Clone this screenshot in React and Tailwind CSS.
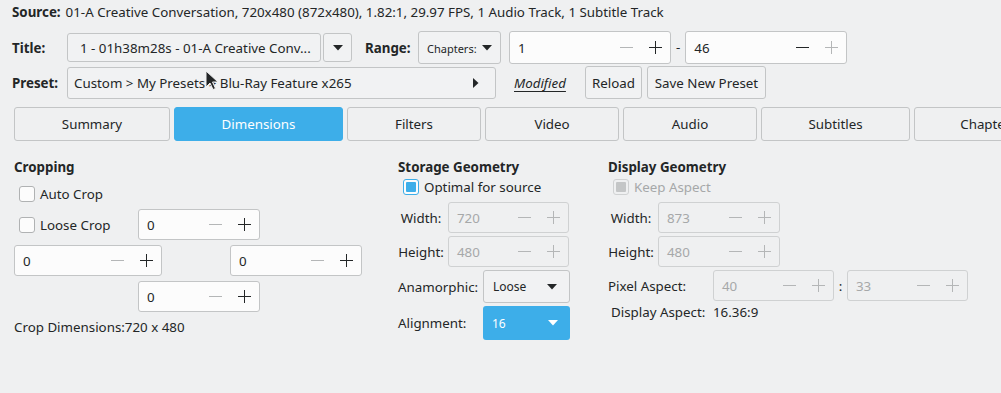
import React from "react";

const Minus = ({ c }) => (
  <svg width="13" height="13" viewBox="0 0 13 13"><line x1="0" y1="6.5" x2="13" y2="6.5" stroke={c} strokeWidth="1" /></svg>
);
const Plus = ({ c }) => (
  <svg width="13" height="13" viewBox="0 0 13 13"><line x1="0" y1="6.5" x2="13" y2="6.5" stroke={c} strokeWidth="1" /><line x1="6.5" y1="0" x2="6.5" y2="13" stroke={c} strokeWidth="1" /></svg>
);
const Tri = ({ c = "#232627" }) => (
  <svg width="10" height="6" viewBox="0 0 10 6"><path d="M0 0 L10 0 L5 5.5 Z" fill={c} /></svg>
);

function Spin({ value, w, h = "h-[31px]", minusOn = false, plusOn = true, disabled = false }) {
  const on = "#232627";
  const off = "#b4b6b7";
  return (
    <div
      className={`flex items-center ${h} rounded-[3px] border ${disabled ? "border-[#cfd1d2] bg-[#eff0f1] text-[#a6a8a9]" : "border-[#c3c5c6] bg-[#fcfcfc] text-[#232627]"} pl-[8px] pr-[8px]`}
      style={{ width: w }}
    >
      <span className="flex-1 pt-[2px]">{value}</span>
      <span className="mr-[16px] flex"><Minus c={disabled ? off : minusOn ? on : off} /></span>
      <span className="flex"><Plus c={disabled ? off : plusOn ? on : off} /></span>
    </div>
  );
}

function Check({ checked, disabled, label }) {
  return (
    <div className="flex items-center gap-[5px]">
      {checked ? (
        <div className="w-[16px] h-[16px] rounded-[3px] border border-[#3daee9] bg-[#fcfcfc] p-[2px]">
          <div className="w-full h-full rounded-[1px] bg-[#3daee9]" />
        </div>
      ) : disabled ? (
        <div className="w-[16px] h-[16px] rounded-[3px] border border-[#d0d2d3] bg-[#eff0f1] p-[2px]">
          <div className="w-full h-full rounded-[1px] bg-[#c4c6c7]" />
        </div>
      ) : (
        <div className="w-[16px] h-[16px] rounded-[3px] border border-[#b0b2b3] bg-[#fcfcfc]" />
      )}
      <span className={`pt-[2px] ${disabled ? "text-[#a6a8a9]" : ""}`}>{label}</span>
    </div>
  );
}

const Tab = ({ label, w, active }) => (
  <div
    className={`flex-none flex items-center justify-center h-[34px] pt-[2px] rounded-[3px] border ${active ? "bg-[#3daee9] border-[#3daee9] text-white" : "bg-[#eff0f1] border-[#c3c5c6] text-[#232627]"}`}
    style={{ width: w }}
  >
    {label}
  </div>
);

export default function App() {
  return (
    <div
      className="relative w-[1001px] h-[393px] overflow-hidden bg-[#eff0f1] text-[#232627] text-[13.33px] leading-none"
      style={{ fontFamily: '"Noto Sans", "Open Sans", sans-serif' }}
    >
      {/* Source */}
      <div className="flex items-center h-[24px] pl-[12px] pt-[1px]">
        <span className="font-bold mr-[5px]">Source:</span>
        <span>01-A Creative Conversation, 720x480 (872x480), 1.82:1, 29.97 FPS, 1 Audio Track, 1 Subtitle Track</span>
      </div>

      {/* Title row */}
      <div className="flex items-center h-[33px] mt-[7px] pl-[12px]">
        <span className="font-bold w-[55px] pt-[2px]">Title:</span>
        <div className="flex items-center h-[29px] w-[254px] border border-[#c3c5c6] rounded-[3px] bg-[#f1f2f3] pl-[12px] pt-[2px]">
          1 - 01h38m28s - 01-A Creative Conv...
        </div>
        <div className="flex items-center justify-center h-[29px] w-[29px] ml-[2px] border border-[#c3c5c6] rounded-[3px] bg-[#f1f2f3]">
          <Tri />
        </div>
        <span className="font-bold ml-[13px] w-[53px] pt-[2px]">Range:</span>
        <div className="flex items-center h-[33px] w-[83px] border border-[#c3c5c6] rounded-[3px] bg-[#f1f2f3] pl-[8px] text-[11px]">
          <span className="mr-[5px] pt-[1px]">Chapters:</span>
          <Tri />
        </div>
        <div className="ml-[8px]">
          <Spin value="1" w="162px" h="h-[33px]" minusOn={false} plusOn={true} />
        </div>
        <span className="mx-[5px]">-</span>
        <Spin value="46" w="162px" h="h-[33px]" minusOn={true} plusOn={false} />
      </div>

      {/* Preset row */}
      <div className="flex items-center h-[33px] mt-[2px] pl-[12px]">
        <span className="font-bold w-[55px] pt-[2px]">Preset:</span>
        <div className="flex items-center h-[32px] w-[429px] border border-[#c3c5c6] rounded-[3px] bg-[#f1f2f3] pl-[6px] pr-[16px]">
          <span className="flex-1 pt-[2px]">Custom &gt; My Presets &gt; Blu-Ray Feature x265</span>
          <svg width="6" height="10" viewBox="0 0 6 10"><path d="M0 0 L5.5 5 L0 10 Z" fill="#232627" /></svg>
        </div>
        <span className="ml-[18px] pt-[2px] italic underline underline-offset-[3px]">Modified</span>
        <div className="flex items-center justify-center ml-[19px] h-[33px] w-[57px] pt-[2px] border border-[#c3c5c6] rounded-[3px] bg-[#f1f2f3]">Reload</div>
        <div className="flex items-center justify-center ml-[5px] h-[33px] w-[119px] pt-[2px] border border-[#c3c5c6] rounded-[3px] bg-[#f1f2f3]">Save New Preset</div>
      </div>

      {/* Tabs */}
      <div className="flex gap-[4px] mt-[8px] pl-[14px]">
        <Tab label="Summary" w="156px" />
        <Tab label="Dimensions" w="169px" active />
        <Tab label="Filters" w="134px" />
        <Tab label="Video" w="134px" />
        <Tab label="Audio" w="134px" />
        <Tab label="Subtitles" w="149px" />
        <Tab label="Chapters" w="149px" />
      </div>

      {/* Content */}
      <div className="flex mt-[18px]">
        {/* Cropping */}
        <div className="w-[398px] pl-[14px] flex flex-col">
          <div className="font-bold h-[16px] flex items-center pt-[1px]">Cropping</div>
          <div className="mt-[11px] ml-[5px] h-[16px] flex items-center">
            <Check label="Auto Crop" />
          </div>
          <div className="mt-[7px] flex items-center">
            <div className="w-[124px] pl-[5px]"><Check label="Loose Crop" /></div>
            <Spin value="0" w="122px" />
          </div>
          <div className="mt-[5px] flex items-center">
            <Spin value="0" w="148px" />
            <div className="w-[68px]" />
            <Spin value="0" w="132px" />
          </div>
          <div className="mt-[5px] flex items-center pl-[124px]">
            <Spin value="0" w="122px" />
          </div>
          <div className="mt-[8px] h-[16px] flex items-center">Crop Dimensions:720 x 480</div>
        </div>

        {/* Storage Geometry */}
        <div className="w-[210px] flex flex-col">
          <div className="font-bold h-[16px] flex items-center pt-[1px]">Storage Geometry</div>
          <div className="mt-[4px] ml-[5px] h-[16px] flex items-center">
            <Check checked label="Optimal for source" />
          </div>
          <div className="mt-[7px] flex items-center">
            <span className="w-[46px] text-center pt-[2px]">Width:</span>
            <div className="ml-[4px]"><Spin value="720" w="121px" disabled /></div>
          </div>
          <div className="mt-[3px] flex items-center">
            <span className="w-[46px] text-center pt-[2px]">Height:</span>
            <div className="ml-[4px]"><Spin value="480" w="121px" disabled /></div>
          </div>
          <div className="mt-[3px] flex items-center">
            <span className="w-[85px] pt-[2px]">Anamorphic:</span>
            <div className="flex items-center h-[33px] w-[87px] border border-[#c3c5c6] rounded-[3px] bg-[#f1f2f3] pl-[9px] pr-[12px] text-[12px]">
              <span className="flex-1 pt-[1px]">Loose</span>
              <Tri />
            </div>
          </div>
          <div className="mt-[3px] flex items-center">
            <span className="w-[85px] pt-[2px]">Alignment:</span>
            <div className="flex items-center h-[34px] w-[87px] rounded-[3px] bg-[#3daee9] text-white pl-[9px] pr-[12px] text-[12px]">
              <span className="flex-1 pt-[1px]">16</span>
              <Tri c="#ffffff" />
            </div>
          </div>
        </div>

        {/* Display Geometry */}
        <div className="flex-1 flex flex-col">
          <div className="font-bold h-[16px] flex items-center pt-[1px]">Display Geometry</div>
          <div className="mt-[4px] ml-[5px] h-[16px] flex items-center">
            <Check disabled label="Keep Aspect" />
          </div>
          <div className="mt-[7px] flex items-center">
            <span className="w-[46px] text-center pt-[2px]">Width:</span>
            <div className="ml-[4px]"><Spin value="873" w="122px" disabled /></div>
          </div>
          <div className="mt-[3px] flex items-center">
            <span className="w-[46px] text-center pt-[2px]">Height:</span>
            <div className="ml-[4px]"><Spin value="480" w="122px" disabled /></div>
          </div>
          <div className="mt-[3px] flex items-center">
            <span className="w-[105px] pt-[2px]">Pixel Aspect:</span>
            <Spin value="40" w="121px" disabled />
            <span className="w-[13px] text-center pt-[2px]">:</span>
            <Spin value="33" w="121px" disabled />
          </div>
          <div className="mt-[4px] flex items-center h-[16px]">
            <span className="ml-[3px] w-[102px]">Display Aspect:</span>
            <span>16.36:9</span>
          </div>
        </div>
      </div>

      {/* Mouse cursor */}
      <svg className="absolute left-[205px] top-[70px]" width="16" height="22" viewBox="0 0 16 22">
        <path d="M1 1 L1 17 L5 13 L8 19.5 L10.5 18.5 L7.5 12 L13 12 Z" fill="#232627" stroke="#eff0f1" strokeWidth="1" />
      </svg>
    </div>
  );
}
